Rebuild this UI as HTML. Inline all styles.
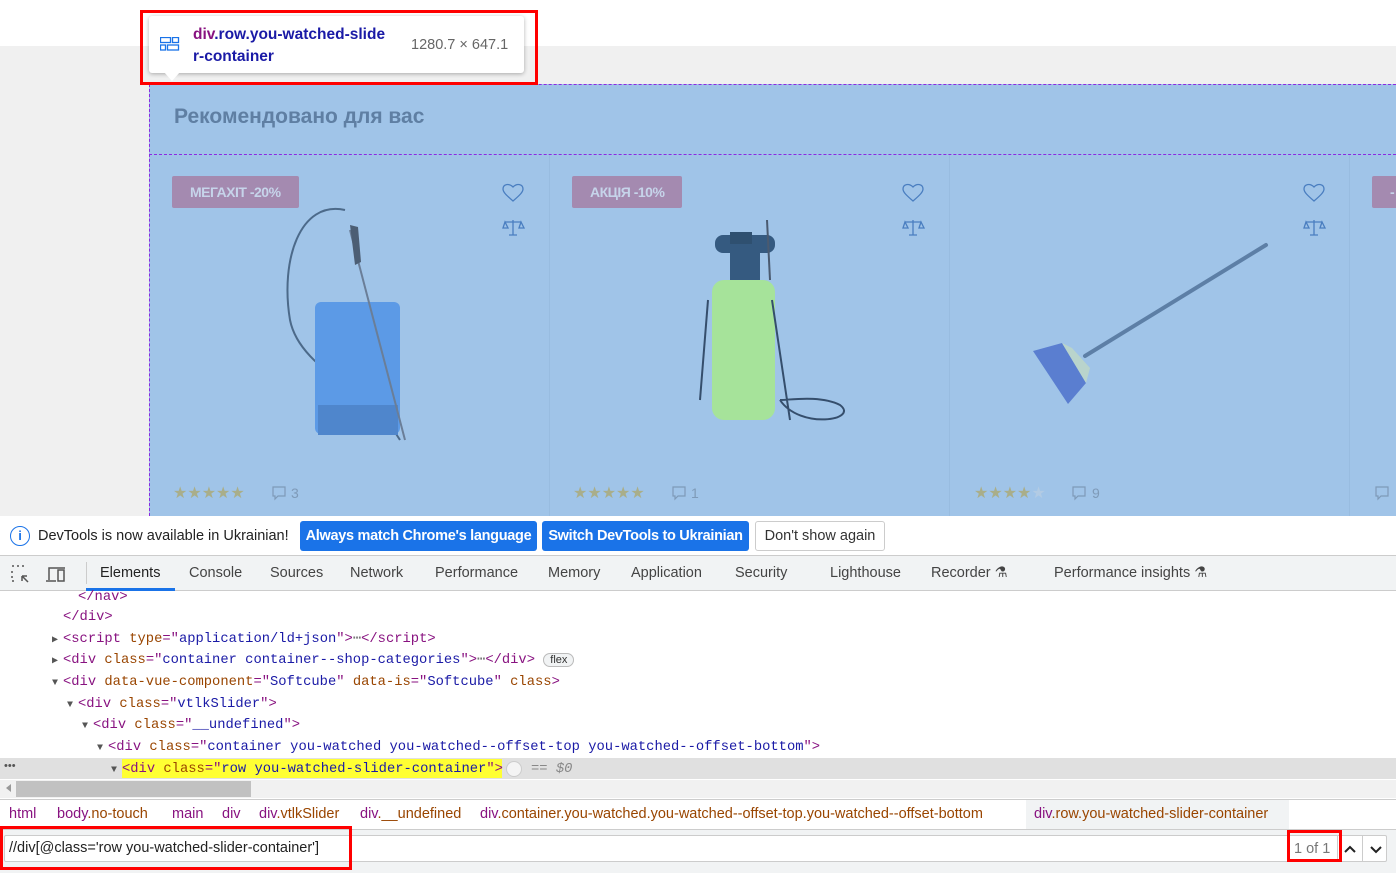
<!DOCTYPE html>
<html><head><meta charset="utf-8">
<style>
*{margin:0;padding:0;box-sizing:border-box}
body{width:1396px;height:873px;overflow:hidden;position:relative;background:#fff;font-family:"Liberation Sans",sans-serif}
.a{position:absolute}
.mono{font-family:"Liberation Mono","DejaVu Sans Mono",monospace;font-size:13.8px;white-space:pre}
.tag{color:#881280}.at{color:#994500}.av{color:#1a1aa6}
.code div{position:absolute;height:21px;line-height:21px}
.tri{display:inline-block;width:11px;color:#555;font-size:10px}
.tab{position:absolute;top:556px;height:35px;line-height:35px;font-size:14.5px;color:#444}
.bc{position:absolute;top:800px;height:29px;line-height:29px;font-size:14.5px}
.stars{color:#a9ae8a;font-size:16px;letter-spacing:0px}
.badge{position:absolute;height:32px;line-height:32px;background:#a48ab0;color:#c6d4ea;font-weight:bold;font-size:14px;padding:0 18px;border-radius:2px;letter-spacing:-0.5px}
</style></head><body>
<div class="a" style="left:0;top:46px;width:1396px;height:470px;background:#f0f0f0"></div>
<div class="a" style="left:149px;top:84px;width:1247px;height:432px;background:#a0c4e8"></div>
<div class="a" style="left:149px;top:84px;width:1247px;border-top:1px dashed #8a2be2"></div>
<div class="a" style="left:149px;top:154px;width:1247px;border-top:1px dashed #8a2be2"></div>
<div class="a" style="left:149px;top:84px;height:432px;border-left:1px dashed #8a2be2"></div>
<div class="a" style="left:549px;top:155px;width:1px;height:361px;background:#98bce0"></div>
<div class="a" style="left:949px;top:155px;width:1px;height:361px;background:#98bce0"></div>
<div class="a" style="left:1349px;top:155px;width:1px;height:361px;background:#98bce0"></div>
<div class="a" style="left:174px;top:105px;font-size:21px;font-weight:bold;color:#5f7fa3">Рекомендовано для вас</div>
<div class="badge" style="left:172px;top:176px">МЕГАХІТ -20%</div>
<div class="badge" style="left:572px;top:176px">АКЦІЯ -10%</div>
<div class="badge" style="left:1372px;top:176px;width:40px">-</div>
<svg class="a" style="left:0;top:0" width="1396" height="516">
<g fill="none" stroke="#4a7ec0" stroke-width="1.3">
<path d="M513 201 C506 195 503 192 503 189 C503 184 509 183 513 187 C517 183 523 184 523 189 C523 192 520 195 513 201Z"/>
<path d="M913 201 C906 195 903 192 903 189 C903 184 909 183 913 187 C917 183 923 184 923 189 C923 192 920 195 913 201Z"/>
<path d="M1314 201 C1307 195 1304 192 1304 189 C1304 184 1310 183 1314 187 C1318 183 1324 184 1324 189 C1324 192 1321 195 1314 201Z"/>
<path d="M513 220v15M509 235h8M505 222h16M505 222l-2 6h5zM521 222l-2 6h5z"/>
<path d="M913 220v15M909 235h8M905 222h16M905 222l-2 6h5zM921 222l-2 6h5z"/>
<path d="M1314 220v15M1310 235h8M1306 222h16M1306 222l-2 6h5zM1322 222l-2 6h5z"/>
</g>
<path d="M345 210 C300 200 280 260 290 320 C300 370 370 390 400 440" fill="none" stroke="#4c6a8a" stroke-width="2"/>
<rect x="315" y="302" width="85" height="132" rx="6" fill="#5c9ae6"/>
<rect x="318" y="405" width="80" height="30" fill="#4f86cc"/>
<path d="M350 230 L405 440" stroke="#6a7e98" stroke-width="2"/>
<path d="M350 225 l5 40 l6 -3 l-3 -35z" fill="#4c5e74"/>
<rect x="712" y="280" width="63" height="140" rx="12" fill="#a6e39a"/>
<rect x="730" y="250" width="30" height="30" fill="#355a80"/>
<rect x="715" y="235" width="60" height="18" rx="8" fill="#355a80"/>
<rect x="730" y="232" width="22" height="12" fill="#2f5070"/>
<path d="M708 300 L700 400 M772 300 L790 420 M780 400 C800 430 860 420 840 405 C820 395 790 400 780 400" fill="none" stroke="#354e6c" stroke-width="2"/>
<path d="M767 220 L770 280" stroke="#4a5a70" stroke-width="2"/>
<path d="M1085 356 L1266 245" stroke="#5d7fa6" stroke-width="4" stroke-linecap="round"/>
<path d="M1033 351 L1062 343 L1086 383 L1068 404Z" fill="#5a7ed0"/>
<path d="M1062 343 L1072 348 L1090 368 L1086 383Z" fill="#b9d4cc"/>
<g fill="none" stroke="#7e9ab8" stroke-width="1.2">
<path d="M273 487h12v9h-7l-3 3v-3h-2z"/><path d="M673 487h12v9h-7l-3 3v-3h-2z"/><path d="M1073 487h12v9h-7l-3 3v-3h-2z"/><path d="M1376 487h12v9h-7l-3 3v-3h-2z"/>
</g>
</svg>
<div class="a stars" style="left:173px;top:483px">★★★★★</div>
<div class="a" style="left:291px;top:485px;font-size:14px;color:#7e9ab8">3</div>
<div class="a stars" style="left:573px;top:483px">★★★★★</div>
<div class="a" style="left:691px;top:485px;font-size:14px;color:#7e9ab8">1</div>
<div class="a stars" style="left:974px;top:483px">★★★★<span style="color:#b2cbe4">★</span></div>
<div class="a" style="left:1092px;top:485px;font-size:14px;color:#7e9ab8">9</div>
<div class="a" style="left:149px;top:16px;width:375px;height:57px;background:#fff;border-radius:3px;box-shadow:0 1px 4px rgba(0,0,0,.3)"></div>
<div class="a" style="left:164px;top:72px;width:0;height:0;border-left:8px solid transparent;border-right:8px solid transparent;border-top:9px solid #fff"></div>
<svg class="a" style="left:160px;top:37px" width="20" height="14"><g fill="none" stroke="#1a73e8" stroke-width="1.3"><rect x="0.5" y="0.5" width="10" height="5"/><rect x="12.5" y="0.5" width="6" height="5"/><rect x="0.5" y="8" width="5" height="5"/><rect x="7.5" y="8" width="11" height="5"/></g></svg>
<div class="a" style="left:193px;top:24px;font-size:15.5px;font-weight:bold;color:#1a1aa6;line-height:22px"><span style="color:#881280">div</span>.row.you-watched-slide<br>r-container</div>
<div class="a" style="left:411px;top:37px;font-size:14.5px;color:#666">1280.7 × 647.1</div>
<div class="a" style="left:140px;top:10px;width:398px;height:75px;border:3px solid #f00"></div>
<div class="a" style="left:0;top:516px;width:1396px;height:40px;background:#fff;border-bottom:1px solid #ccc"></div>
<div class="a" style="left:10px;top:526px;width:20px;height:20px;border:1.5px solid #1a73e8;border-radius:50%;color:#1a73e8;font-size:13px;text-align:center;line-height:17px;font-weight:bold">i</div>
<div class="a" style="left:38px;top:528px;font-size:14.5px;color:#222">DevTools is now available in Ukrainian!</div>
<div class="a" style="left:300px;top:521px;width:237px;height:30px;background:#1a73e8;border-radius:3px;color:#fff;font-size:14.5px;font-weight:bold;line-height:30px;text-align:center;letter-spacing:-0.3px">Always match Chrome's language</div>
<div class="a" style="left:542px;top:521px;width:207px;height:30px;background:#1a73e8;border-radius:3px;color:#fff;font-size:14.5px;font-weight:bold;line-height:30px;text-align:center;letter-spacing:-0.3px">Switch DevTools to Ukrainian</div>
<div class="a" style="left:755px;top:521px;width:130px;height:30px;border:1px solid #ccc;border-radius:3px;color:#333;font-size:14.5px;line-height:28px;text-align:center">Don't show again</div>
<div class="a" style="left:0;top:556px;width:1396px;height:35px;background:#f1f3f4;border-bottom:1px solid #ccc"></div>
<svg class="a" style="left:10px;top:564px" width="60" height="20"><g fill="none" stroke="#555" stroke-width="1.5"><path d="M2 2h2M7 2h2M12 2h2M2 7v2M2 12v2M2 17h2"/><path d="M12 12l6 6M12 12h5M12 12v5"/><path d="M39 16V4h16M36 17h10M48 6h6v11h-6z"/></g></svg>
<div class="a" style="left:86px;top:562px;width:1px;height:22px;background:#ccc"></div>
<div class="tab" style="left:100px;color:#222">Elements</div>
<div class="a" style="left:86px;top:588px;width:89px;height:3px;background:#1a73e8"></div>
<div class="tab" style="left:189px">Console</div>
<div class="tab" style="left:270px">Sources</div>
<div class="tab" style="left:350px">Network</div>
<div class="tab" style="left:435px">Performance</div>
<div class="tab" style="left:548px">Memory</div>
<div class="tab" style="left:631px">Application</div>
<div class="tab" style="left:735px">Security</div>
<div class="tab" style="left:830px">Lighthouse</div>
<div class="tab" style="left:931px">Recorder ⚗</div>
<div class="tab" style="left:1054px">Performance insights ⚗</div>
<div class="a" style="left:0;top:758px;width:1396px;height:21px;background:#e0e0e0"></div>
<div class="a" style="left:122px;top:759px;width:380px;height:19px;background:#ffff33"></div>
<div class="code mono">
<div style="left:78px;top:587px" class="tag">&lt;/nav&gt;</div>
<div style="left:63px;top:607px" class="tag">&lt;/div&gt;</div>
<div style="left:52px;top:629px"><span class="tri">▶</span><span class="tag">&lt;script </span><span class="at">type</span><span class="tag">="</span><span class="av">application/ld+json</span><span class="tag">"&gt;</span><span style="color:#777">⋯</span><span class="tag">&lt;/script&gt;</span></div>
<div style="left:52px;top:650px"><span class="tri">▶</span><span class="tag">&lt;div </span><span class="at">class</span><span class="tag">="</span><span class="av">container container--shop-categories</span><span class="tag">"&gt;</span><span style="color:#777">⋯</span><span class="tag">&lt;/div&gt;</span> <span style="font-family:'Liberation Sans';font-size:11px;border:1px solid #bbb;border-radius:8px;padding:0 6px;background:#f1f3f4;color:#333">flex</span></div>
<div style="left:52px;top:672px"><span class="tri">▼</span><span class="tag">&lt;div </span><span class="at">data-vue-component</span><span class="tag">="</span><span class="av">Softcube</span><span class="tag">" </span><span class="at">data-is</span><span class="tag">="</span><span class="av">Softcube</span><span class="tag">" </span><span class="at">class</span><span class="tag">&gt;</span></div>
<div style="left:67px;top:694px"><span class="tri">▼</span><span class="tag">&lt;div </span><span class="at">class</span><span class="tag">="</span><span class="av">vtlkSlider</span><span class="tag">"&gt;</span></div>
<div style="left:82px;top:715px"><span class="tri">▼</span><span class="tag">&lt;div </span><span class="at">class</span><span class="tag">="</span><span class="av">__undefined</span><span class="tag">"&gt;</span></div>
<div style="left:97px;top:737px"><span class="tri">▼</span><span class="tag">&lt;div </span><span class="at">class</span><span class="tag">="</span><span class="av">container you-watched you-watched--offset-top you-watched--offset-bottom</span><span class="tag">"&gt;</span></div>
<div style="left:111px;top:759px"><span class="tri">▼</span><span class="tag">&lt;div </span><span class="at">class</span><span class="tag">="</span><span class="av">row you-watched-slider-container</span><span class="tag">"&gt;</span></div>
<div style="left:531px;top:759px;color:#888;font-style:italic">== $0</div>
</div>
<div class="a" style="left:506px;top:761px;width:16px;height:16px;border-radius:50%;background:#f4f4f4;border:1px solid #ccc"></div>
<div class="a" style="left:4px;top:760px;font-size:11px;color:#555">•••</div>
<div class="a" style="left:0;top:780px;width:1396px;height:18px;background:#f1f1f1"></div>
<div class="a" style="left:16px;top:781px;width:235px;height:16px;background:#c1c1c1"></div>
<div class="a" style="left:6px;top:784px;width:0;height:0;border-top:4px solid transparent;border-bottom:4px solid transparent;border-right:5px solid #999"></div>
<div class="a" style="left:0;top:799px;width:1396px;height:1px;background:#ccc"></div>
<div class="a" style="left:1026px;top:800px;width:263px;height:29px;background:#f1f3f4"></div>
<div class="bc" style="left:9px;color:#881280">html</div>
<div class="bc" style="left:57px;color:#881280">body<span class="at">.no-touch</span></div>
<div class="bc" style="left:172px;color:#881280">main</div>
<div class="bc" style="left:222px;color:#881280">div</div>
<div class="bc" style="left:259px;color:#881280">div<span class="at">.vtlkSlider</span></div>
<div class="bc" style="left:360px;color:#881280">div<span class="at">.__undefined</span></div>
<div class="bc" style="left:480px;color:#881280">div<span class="at">.container.you-watched.you-watched--offset-top.you-watched--offset-bottom</span></div>
<div class="bc" style="left:1034px;color:#881280">div<span class="at">.row.you-watched-slider-container</span></div>
<div class="a" style="left:0;top:829px;width:1396px;height:44px;background:#f1f3f4;border-top:1px solid #ccc"></div>
<div class="a" style="left:4px;top:835px;width:1383px;height:27px;background:#fff;border:1px solid #ccc;border-radius:2px"></div>
<div class="a" style="left:1337px;top:836px;width:1px;height:25px;background:#ccc"></div>
<div class="a" style="left:1362px;top:836px;width:1px;height:25px;background:#ccc"></div>
<div class="a" style="left:9px;top:840px;font-size:14.5px;color:#222">//div[@class='row you-watched-slider-container']</div>
<div class="a" style="left:1294px;top:841px;font-size:14.5px;color:#777">1 of 1</div>
<svg class="a" style="left:1342px;top:840px" width="48" height="18"><g fill="none" stroke="#222" stroke-width="2"><path d="M3 12l5-5 5 5"/><path d="M29 7l5 5 5-5"/></g></svg>
<div class="a" style="left:0;top:826px;width:352px;height:44px;border:3px solid #f00"></div>
<div class="a" style="left:1287px;top:830px;width:55px;height:32px;border:3px solid #f00"></div>
</body></html>
